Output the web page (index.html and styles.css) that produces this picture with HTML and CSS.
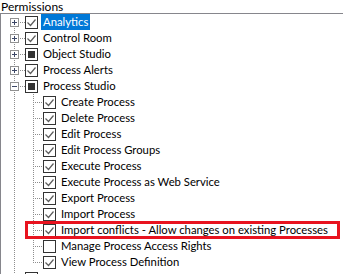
FILE: index.html
```html
<!DOCTYPE html>
<html lang="en">
<head>
    <meta charset="UTF-8">
    <title>Permissions</title>
    <link rel="stylesheet" href="styles.css">
</head>
<body>
    <svg class="defs" width="0" height="0">
        <symbol id="plus" viewBox="0 0 9 9">
            <rect x="0.5" y="0.5" width="8" height="8" fill="#fff" stroke="#919191"/>
            <path d="M2 4.5h5M4.5 2v5" stroke="#3c4766"/>
        </symbol>
        <symbol id="minus" viewBox="0 0 9 9">
            <rect x="0.5" y="0.5" width="8" height="8" fill="#fff" stroke="#919191"/>
            <path d="M2 4.5h5" stroke="#3c4766"/>
        </symbol>
        <symbol id="on" viewBox="0 0 13 13">
            <rect x="0.5" y="0.5" width="12" height="12" fill="#fff" stroke="#333"/>
            <path d="M2.5 6.5l3 3l5-6" fill="none" stroke="#5c5c5c" stroke-width="1.2"/>
        </symbol>
        <symbol id="off" viewBox="0 0 13 13">
            <rect x="0.5" y="0.5" width="12" height="12" fill="#fff" stroke="#333"/>
        </symbol>
        <symbol id="part" viewBox="0 0 13 13">
            <rect x="0.5" y="0.5" width="12" height="12" fill="#fff" stroke="#333"/>
            <rect x="3" y="3" width="7" height="7" fill="#333"/>
        </symbol>
    </svg>

    <div class="head">Permissions</div>
    <div class="tree">
        <!-- top level -->
        <div class="row">
            <span class="g0 first"><svg class="exp"><use href="#plus"/></svg></span>
            <svg class="chk"><use href="#on"/></svg>
            <span class="label sel">Analytics</span>
        </div>
        <div class="row">
            <span class="g0 branch"><svg class="exp"><use href="#plus"/></svg></span>
            <svg class="chk"><use href="#on"/></svg>
            <span class="label">Control Room</span>
        </div>
        <div class="row">
            <span class="g0 branch"><svg class="exp"><use href="#plus"/></svg></span>
            <svg class="chk"><use href="#part"/></svg>
            <span class="label">Object Studio</span>
        </div>
        <div class="row">
            <span class="g0 branch"><svg class="exp"><use href="#plus"/></svg></span>
            <svg class="chk"><use href="#on"/></svg>
            <span class="label">Process Alerts</span>
        </div>
        <div class="row">
            <span class="g0 branch"><svg class="exp"><use href="#minus"/></svg></span>
            <svg class="chk"><use href="#part"/></svg>
            <span class="label">Process Studio</span>
        </div>

        <!-- Process Studio children -->
        <div class="row">
            <span class="g0"></span><span class="g1"></span>
            <svg class="chk"><use href="#on"/></svg>
            <span class="label">Create Process</span>
        </div>
        <div class="row">
            <span class="g0"></span><span class="g1"></span>
            <svg class="chk"><use href="#on"/></svg>
            <span class="label">Delete Process</span>
        </div>
        <div class="row">
            <span class="g0"></span><span class="g1"></span>
            <svg class="chk"><use href="#on"/></svg>
            <span class="label">Edit Process</span>
        </div>
        <div class="row">
            <span class="g0"></span><span class="g1"></span>
            <svg class="chk"><use href="#on"/></svg>
            <span class="label">Edit Process Groups</span>
        </div>
        <div class="row">
            <span class="g0"></span><span class="g1"></span>
            <svg class="chk"><use href="#on"/></svg>
            <span class="label">Execute Process</span>
        </div>
        <div class="row">
            <span class="g0"></span><span class="g1"></span>
            <svg class="chk"><use href="#on"/></svg>
            <span class="label">Execute Process as Web Service</span>
        </div>
        <div class="row">
            <span class="g0"></span><span class="g1"></span>
            <svg class="chk"><use href="#on"/></svg>
            <span class="label">Export Process</span>
        </div>
        <div class="row">
            <span class="g0"></span><span class="g1"></span>
            <svg class="chk"><use href="#on"/></svg>
            <span class="label">Import Process</span>
        </div>
        <div class="row marked">
            <span class="g0"></span><span class="g1"></span>
            <svg class="chk"><use href="#on"/></svg>
            <span class="label">Import conflicts - Allow changes on existing Processes</span>
        </div>
        <div class="row">
            <span class="g0"></span><span class="g1"></span>
            <svg class="chk"><use href="#off"/></svg>
            <span class="label">Manage Process Access Rights</span>
        </div>
        <div class="row">
            <span class="g0"></span><span class="g1 last"></span>
            <svg class="chk"><use href="#on"/></svg>
            <span class="label">View Process Definition</span>
        </div>

        <!-- next top level item, only its checkbox top shows -->
        <div class="row">
            <span class="g0"></span>
            <svg class="chk"><use href="#off"/></svg>
        </div>
    </div>
</body>
</html>
```

FILE: styles.css
```css
body {
    margin: 0;
    background: #fff;
    font-family: Lato, "Liberation Sans", sans-serif;
    font-size: 11.3px;
    color: #000;
    overflow: hidden;
}
.defs {
    display: block;
    width: 0;
    height: 0;
}
.head {
    height: 13px;
    line-height: 13px;
    padding-left: 1px;
    font-size: 12px;
    border-bottom: 1px solid #86868c;
}
.tree {
    border-left: 1px solid #86868c;
    height: 260px;
}
.row {
    display: flex;
    height: 16px;
    align-items: flex-start;
    white-space: nowrap;
}

/* dotted tree guides */
.g0 {
    flex: none;
    display: flex;
    width: 24px;
    height: 16px;
    background-image: repeating-linear-gradient(to bottom, #8e8e8e 0 1px, transparent 1px 2px);
    background-size: 1px 16px;
    background-position: 13px 0;
    background-repeat: no-repeat;
}
.g0.branch,
.g0.first {
    background-image:
        repeating-linear-gradient(to right, #8e8e8e 0 1px, transparent 1px 2px),
        repeating-linear-gradient(to bottom, #8e8e8e 0 1px, transparent 1px 2px);
    background-size: 11px 1px, 1px 16px;
    background-position: 13px 8px, 13px 0;
}
.g0.first {
    background-size: 11px 1px, 1px 8px;
    background-position: 13px 8px, 13px 8px;
}
.g1 {
    flex: none;
    width: 18px;
    height: 16px;
    background-image:
        repeating-linear-gradient(to right, #8e8e8e 0 1px, transparent 1px 2px),
        repeating-linear-gradient(to bottom, #8e8e8e 0 1px, transparent 1px 2px);
    background-size: 10px 1px, 1px 16px;
    background-position: 8px 8px, 8px 0;
    background-repeat: no-repeat;
}
.g1.last {
    background-size: 10px 1px, 1px 9px;
}
.exp {
    width: 9px;
    height: 9px;
    margin: 4px 0 0 9px;
}
.chk {
    flex: none;
    width: 13px;
    height: 13px;
    margin-top: 2px;
}
.label {
    margin-left: 3px;
    padding: 0 2px;
    line-height: 16px;
    height: 16px;
}
.label.sel {
    background: #0078d7;
    color: #fff;
}

/* red annotation box */
.marked {
    position: relative;
}
.marked::after {
    content: "";
    position: absolute;
    left: 24px;
    right: 3px;
    top: -1px;
    bottom: -1px;
    border: 3px solid #e8131f;
}
```
